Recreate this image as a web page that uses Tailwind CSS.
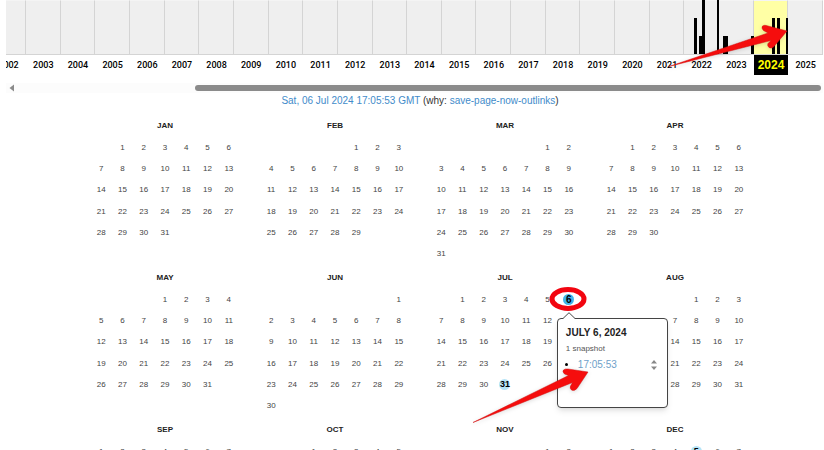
<!DOCTYPE html>
<html lang="en">
<head>
    <meta charset="UTF-8">
    <meta name="viewport" content="width=device-width, initial-scale=1.0">
    <title>Calendar - Snapshots 2024</title>
    <script src="https://cdn.jsdelivr.net/npm/@tailwindcss/browser@4"></script>
</head>
<body class="relative h-screen overflow-hidden bg-white font-['Liberation_Sans',Arial,sans-serif] text-[#333]">
    <!-- Year timeline -->
    <div class="pl-1.5 pr-px">
        <div id="years" class="grid grid-cols-[20px_repeat(23,minmax(0,1fr))]"></div>
        <!-- Scrollbar -->
        <div class="mt-2 flex h-2.5 items-center bg-[#fcfcfc] pr-0.5">
            <svg class="ml-0.5 h-2 w-1.5" viewBox="0 0 6 8"><path d="M6 .5v7L1.500 4z" fill="#8b8b8b"/></svg>
            <div class="ml-[181px] h-1.5 flex-1 rounded-full bg-[#8b8b8b]"></div>
        </div>
    </div>

    <p class="pl-4 text-center text-[10px] leading-4">
        <a href="#" class="text-[#428bca]">Sat, 06 Jul 2024 17:05:53 GMT</a>
        (why: <a href="#" class="text-[#428bca]">save-page-now-outlinks</a>)
    </p>

    <!-- Months -->
    <main id="months" class="mt-2 grid grid-cols-4 gap-y-[5px] pl-20 pr-16"></main>

    <!-- Red arrow to the timeline -->
    <svg class="absolute left-[660px] top-[20px] h-[50px] w-[134px] drop-shadow-sm" viewBox="660 20 134 50">
        <path d="M669 66.500L768 33L763.500 30.500Q761 28 762.500 26Q764.500 24.500 768 26L787 31L774 46.500Q771.500 49 769 47.500Q767 46 768 43.500L771 40.500Z" fill="#f50d0d" stroke="#d01010" stroke-width=".5"/>
    </svg>

    <script>
        const CAPTURES = { 6: [6, 31], 11: [5] };
        // bars: [left, width, height] inside a year column
        const BARS = {
            2022: [[10, 3, 36], [15, 3, 18], [18, 3, 54], [33, 3, 54]],
            2023: [[4, 5, 18], [32, 3, 18]],
            2024: [[18, 3, 36], [23, 3, 36], [32, 3, 36]]
        };
        const NAMES = ['JAN', 'FEB', 'MAR', 'APR', 'MAY', 'JUN', 'JUL', 'AUG', 'SEP', 'OCT', 'NOV', 'DEC'];

        const popup = `
            <div class="absolute left-1/2 top-[29px] z-10 -ml-3 h-[90px] w-[111px] rounded border border-[#444] bg-white px-2 pt-2 text-left font-normal shadow-md">
                <svg class="absolute -top-[7px] left-[5px] h-[7px] w-3" viewBox="0 0 12 7"><path d="M0 6.500L6 .7L12 6.500V7H0z" fill="#fff"/><path d="M0 6.500L6 .7L12 6.500" fill="none" stroke="#444"/></svg>
                <h3 class="text-[10px] font-bold leading-3 text-[#222]">JULY 6, 2024</h3>
                <p class="mt-1 text-[8px] leading-3 text-[#555]">1 snapshot</p>
                <div class="mt-0.5 flex items-center justify-between">
                    <ul class="list-disc pl-3 text-[10px] leading-4"><li class="marker:text-black"><a href="#" class="text-[#6f9fc9]">17:05:53</a></li></ul>
                    <svg class="mr-px h-3 w-2" viewBox="0 0 8 12"><path d="M1 4.500L4 1l3 3.500zM1 7.500L4 11l3-3.500z" fill="#888"/></svg>
                </div>
            </div>
            <svg class="absolute -left-[10px] -top-[2px] z-20 h-6 w-10" viewBox="0 0 40 24"><ellipse cx="20" cy="12" rx="16" ry="9.500" fill="none" stroke="#f20510" stroke-width="5"/></svg>`;

        function renderYears() {
            let html = '';
            for (let year = 2002; year <= 2025; year++) {
                const on = year === 2024;
                const bars = (BARS[year] || []).map(([x, w, h]) =>
                    `<i class="absolute bottom-0 bg-black" style="left:${x}px;width:${w}px;height:${h}px"></i>`).join('');
                html += `
                    <div class="flex justify-end ${year === 2002 ? 'overflow-hidden' : ''}">
                        <button type="button" class="block shrink-0 ${year === 2002 ? 'w-[35px]' : 'w-full'}">
                            <span class="relative block h-[55px] border-y border-r border-[#d4d4d4] border-t-[#f4f4f4] ${on ? 'bg-[#ffffa5]' : 'bg-[#efefef]'}">${bars}</span>
                            <span class="block h-5 text-center ${on ? 'bg-black text-xs font-bold leading-5 text-[#ffff00]' : 'text-[9px] font-medium leading-5 text-black font-[Roboto,sans-serif]'}">${year}</span>
                        </button>
                    </div>`;
            }
            document.getElementById('years').innerHTML = html;
        }

        function renderDay(month, day) {
            if (!(CAPTURES[month] || []).includes(day)) return day;
            const open = month === 6 && day === 6;
            return `<a href="#" class="mx-auto block size-[11px] rounded-full font-bold leading-[11px] text-black ${open ? 'bg-[#3fb4ea] text-[10px]' : 'bg-[#b5e4f7] text-[9px]'}">${day}</a>`;
        }

        function renderMonth(month) {
            const first = new Date(2024, month, 1).getDay();
            const count = new Date(2024, month + 1, 0).getDate();
            let rows = '';
            for (let week = 0; week < 6; week++) {
                rows += `<tr class="${week === 2 ? 'h-[22px]' : 'h-[21px]'}">`;
                for (let d = 0; d < 7; d++) {
                    const day = week * 7 + d - first + 1;
                    const valid = day > 0 && day <= count;
                    const extra = month === 6 && day === 6 ? popup : '';
                    rows += `<td class="relative p-0">${valid ? renderDay(month, day) + extra : ''}</td>`;
                }
                rows += '</tr>';
            }
            return `
                <section>
                    <h2 class="h-5 text-center text-[8px] font-bold leading-[18px] text-[#222]">${NAMES[month]}</h2>
                    <table class="mx-auto w-[149px] table-fixed text-center text-[8px] leading-3 text-[#444]"><tbody>${rows}</tbody></table>
                </section>`;
        }

        renderYears();
        document.getElementById('months').innerHTML = NAMES.map((_, i) => renderMonth(i)).join('');
    </script>

    <!-- Red arrow to the snapshot link -->
    <svg class="absolute left-[470px] top-[362px] z-30 h-[64px] w-[122px] drop-shadow-sm" viewBox="470 362 122 64">
        <path d="M473 422.500L568.500 375.500L564.500 374Q562 371.500 563.500 370Q565 368.500 568 369L588 372L577 388.500Q574.500 391.500 571.500 390Q569.500 388.500 570.500 386L572.500 382.500Z" fill="#f50d0d" stroke="#d01010" stroke-width=".5"/>
    </svg>
</body>
</html>
